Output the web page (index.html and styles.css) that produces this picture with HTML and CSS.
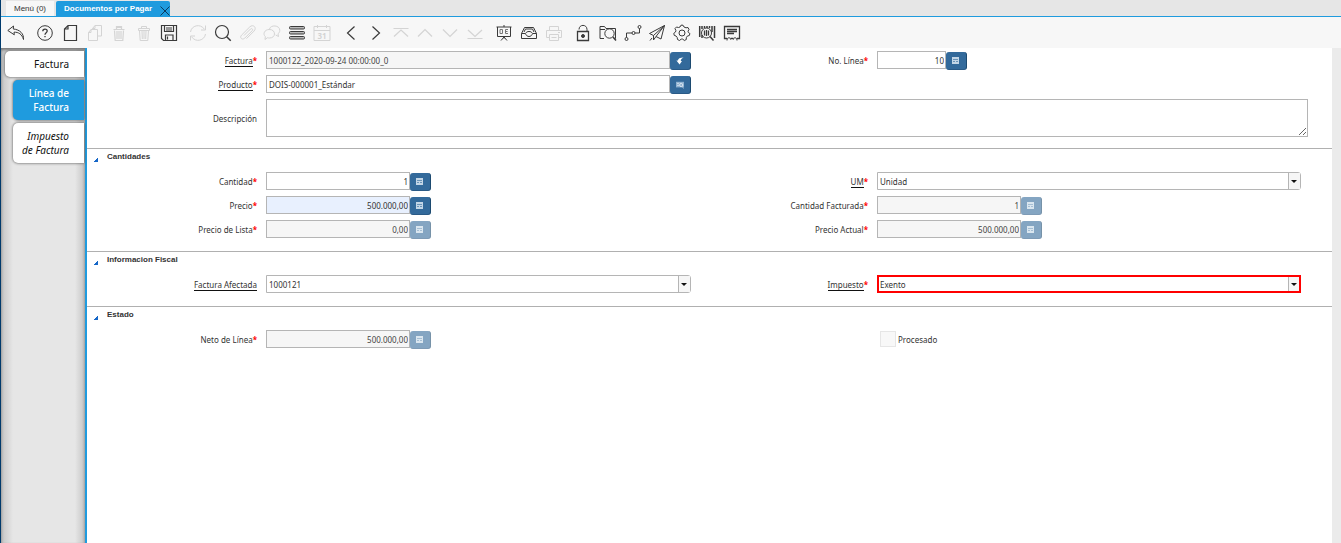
FILE: index.html
```html
<!DOCTYPE html>
<html lang="es">
<head>
    <meta charset="UTF-8">
    <meta name="viewport" content="width=device-width, initial-scale=1.0">
    <title>Documentos por Pagar</title>
    <link rel="stylesheet" href="styles.css">
</head>
<body>

    <!-- Iconos que se repiten -->
    <svg class="simbolos" aria-hidden="true">
        <symbol id="calc" viewBox="0 0 8 8">
            <rect x="0" y="0" width="7" height="7" fill="#c3d6e6"/>
            <path d="M1 2.500h5M1 4.500h2M4 4.500h2" stroke="#6a94b8" fill="none"/>
        </symbol>
    </svg>

    <nav class="pestanas">
        <a class="pestana" href="#">Menú (0)</a>
        <div class="pestana activa">
            <a href="#">Documentos por Pagar</a>
            <button class="cerrar" aria-label="Cerrar"><svg viewBox="0 0 10 10"><path d="M0.500 0.500l9 9M9.500 0.500l-9 9"/></svg></button>
        </div>
    </nav>

    <div class="barra">
        <div class="grupo uno">
            <button aria-label="Deshacer"><svg viewBox="0 0 18 18"><path d="M6.500 2L0.800 6.500l6.500 4.300-.3-2.600c4.500-.2 8 2 9.500 7.300.6-5.500-3.500-10-10.200-10.500z"/></svg></button>
        </div>
        <div class="grupo">
            <button aria-label="Ayuda"><svg viewBox="0 0 18 18"><circle cx="9" cy="9" r="7.300"/><path d="M6.800 7.300c0-3 4.400-2.800 4.400-.2 0 1.600-2.200 1.700-2.200 3.600M9 12v1.300" stroke-width="1.300"/></svg></button>
            <button aria-label="Nuevo"><svg viewBox="0 0 18 18"><path d="M7 1.500h8.500v15h-12V5zM7 1.500V5H3.500" stroke-width="1.200"/></svg></button>
            <button aria-label="Copiar" disabled><svg viewBox="0 0 18 18"><path d="M6.500 5.500V4.500l2.500-3h6.500v10.500h-4M9 1.500v3H6.500M5 5.500h6.500v11h-9V8.500zM5 5.500v3H2.500"/></svg></button>
            <button aria-label="Borrar" disabled><svg viewBox="0 0 18 18"><path d="M3.500 5.500h11M6.500 3.500h5M4.500 6.500l.7 10h7.600l.7-10M7 7v8M9 7v8M11 7v8M6.500 5.500v-3h5v3" stroke-width="1.200"/></svg></button>
            <button aria-label="Borrar selección" disabled><svg viewBox="0 0 18 18"><path d="M3.500 4.500h11v2h-11zM4.500 6.500l.7 10h7.600l.7-10M7 7l.3 8M9 7v8M11 7l-.3 8M6.500 4v-1.500h5V4"/></svg></button>
            <button aria-label="Guardar"><svg viewBox="0 0 18 18"><path d="M1.500 1.500h15v15h-13l-2-2zM4.500 2v5.500h9V2M5.500 16v-5h7.500v5M6 4h6M6 6h6M7.500 12.500v3" stroke-width="1.200"/></svg></button>
        </div>
        <div class="grupo">
            <button aria-label="Refrescar" disabled><svg viewBox="0 0 18 18"><path d="M1.500 8c.8-6.500 9.800-9 14-2.700M16.500 1.500v4.500h-4.500M16.500 10c-.8 6.500-9.800 9-14 2.700M1.500 16.500V12H6"/></svg></button>
            <button aria-label="Buscar"><svg viewBox="0 0 18 18"><circle cx="8" cy="8" r="6.500" stroke-width="1.200"/><path d="M12.700 12.700l4 4" stroke-width="1.500"/></svg></button>
            <button aria-label="Adjunto" disabled><svg viewBox="0 0 18 18"><path d="M5 11.500l6.500-6.500c1.200-1.200 3 .5 1.700 1.700l-7.500 7.500c-2.500 2.300-5.500-.6-3.200-3l8.300-8.300c3.300-3.200 7.500.8 4.200 4.200l-7.500 7.500"/></svg></button>
            <button aria-label="Chat" disabled><svg viewBox="0 0 18 18"><path d="M6.500 5c1-4.500 10.300-4 10.300 1.300 0 1.700-.9 2.800-1.800 3.500l.5 2.700-2.800-1.500M6 5.500c7-.5 7.500 8.500.5 8.500-.8 0-1.500-.1-2-.3L2 15.500l.3-3C-.5 10 1.500 5.700 6 5.500z"/></svg></button>
            <button aria-label="Cuadrícula"><svg viewBox="0 0 18 18" class="lineas"><rect x="1.500" y="2.500" width="15" height="2.500" rx="1"/><rect x="1.500" y="7.500" width="15" height="2.500" rx="1"/><rect x="1.500" y="12.500" width="15" height="2.500" rx="1"/></svg></button>
            <button aria-label="Calendario" disabled><svg viewBox="0 0 18 18"><path d="M1 2.500h16v14H1zM1 6.500h16M4.500 1v3M13.500 1v3"/><text x="4.500" y="15">31</text></svg></button>
        </div>
        <div class="grupo">
            <button aria-label="Anterior"><svg viewBox="0 0 18 18"><path d="M12.500 2.500L5.500 9l7 6.500" stroke-width="1.200"/></svg></button>
            <button aria-label="Siguiente"><svg viewBox="0 0 18 18"><path d="M5.500 2.500l7 6.500-7 6.500" stroke-width="1.200"/></svg></button>
            <button aria-label="Primero" disabled><svg viewBox="0 0 18 18"><path d="M1.500 4.500h15M2 12.500l7-6.500 7 6.500" stroke-width="1.200"/></svg></button>
            <button aria-label="Arriba" disabled><svg viewBox="0 0 18 18"><path d="M2 12.500l7-7 7 7" stroke-width="1.200"/></svg></button>
            <button aria-label="Abajo" disabled><svg viewBox="0 0 18 18"><path d="M2 5.500l7 7 7-7" stroke-width="1.200"/></svg></button>
            <button aria-label="Último" disabled><svg viewBox="0 0 18 18"><path d="M1.500 14.500h15M2 6l7 6.500L16 6" stroke-width="1.200"/></svg></button>
        </div>
        <div class="grupo tres">
            <button aria-label="Informe"><svg viewBox="0 0 18 18"><path d="M1.500 3h15M2.500 3v9.500h13V3M9 1v2M9 12.500v2M9 13l-3 3.500M9 13l3 3.500"/><path d="M5 5.500h2.500v4H5zM13 5.500h-2.500v4h2.500M10.500 7.500h2" stroke="#777"/></svg></button>
            <button aria-label="Archivo"><svg viewBox="0 0 18 18"><path d="M1.500 9.500L4.500 3.500h9l3 6v5h-15zM1.500 9.500h4c1 4 6 4 7 0h4M4 8l1.500-3h7L14 8M6 9c.5-2 5.500-2 6 0"/></svg></button>
            <button aria-label="Imprimir" disabled><svg viewBox="0 0 18 18"><path d="M4.500 6.500v-4h9v4M4.500 13.500h-3v-7h15v7h-3M4.500 10.500h9v6h-9zM6.500 13.500h5M13 8.500h2"/></svg></button>
        </div>
        <div class="grupo siete">
            <button aria-label="Bloquear"><svg viewBox="0 0 18 18"><path d="M3.500 7.500h11v9h-11z" stroke-width="1.300"/><path d="M5 5.500c0-5.500 8-5.500 8 0v2"/><circle cx="9" cy="12" r="1.500" fill="#3a3a3a"/></svg></button>
            <button aria-label="Consultar"><svg viewBox="0 0 18 18"><path d="M5 14.500H1v-12h4.500l1.500 2h9.500v10h-1M1 5.500h5"/><circle cx="10.500" cy="9.500" r="4.700"/><path d="M14 13l3 3.500" stroke-width="1.500"/></svg></button>
            <button aria-label="Flujo"><svg viewBox="0 0 18 18"><circle cx="2.500" cy="15" r="1.500"/><circle cx="9.500" cy="9" r="1.500"/><circle cx="15.500" cy="3" r="1.500"/><path d="M2.500 13.500V9H8M11 9h4.500V4.500"/></svg></button>
            <button aria-label="Enviar"><svg viewBox="0 0 18 18"><path d="M16.500 1.500L1.500 9.500l4 2zM16.500 1.500l-8.500 11 5 2.500zM5.500 11.500V16L8 12.500M2 16.500l2-2.500"/></svg></button>
            <button aria-label="Proceso"><svg viewBox="0 0 18 18"><circle cx="9" cy="9" r="3"/><path d="M7 3l1-1.800h2L11 3l2 .8 2-.3 1 2-1 1.700.4 1.300 1.500 1-.6 2-2 .6-1 1.600V15.500l-2 1-1.500-1.400h-1.600L6.500 16.500l-2-1-.3-2L3 12l-1.800-.7-.4-2 1.700-1.300.4-1.400L2 4.500 3.500 3l2 .5z"/></svg></button>
            <button aria-label="Código"><svg viewBox="0 0 18 18"><path d="M1.700 2v11M4 2v3M4 11v3M6.500 2v2M9 2v2M11.500 2v2M14 2v6M16.500 2v12" stroke-width="1.500"/><circle cx="8.500" cy="9" r="5"/><path d="M6.500 6.500v5M8.500 6v6M10.500 6.500v5" stroke-width="1.300"/><path d="M12 12.500l3.500 4" stroke-width="1.500"/></svg></button>
            <button aria-label="Recibo"><svg viewBox="0 0 18 18"><path d="M4 14.500H1.500v-12h15v12H14M7.500 14.500h3M4 5.500h10M4 7.500h10M4 9.500h7" stroke-width="1.300"/><path d="M4 16.500c0-3.500 3.500-3.500 3.500-1M10.500 15.500c0-2.500 3.500-2.500 3.500 1"/></svg></button>
        </div>
    </div>

    <div class="cuerpo">
        <nav class="lateral">
            <a class="ficha principal" href="#">Factura</a>
            <a class="ficha actual" href="#">Línea de Factura</a>
            <a class="ficha hija" href="#">Impuesto de Factura</a>
        </nav>

        <form class="formulario">
            <div class="campos cabecera">
                <label for="factura"><u>Factura</u><i>*</i></label>
                <div class="campo">
                    <input id="factura" type="text" value="1000122_2020-09-24 00:00:00_0" disabled>
                    <button type="button" class="boton" aria-label="Ver factura"><svg viewBox="0 0 10 10"><path d="M9.500 0.500C5 0.500 2.500 2 2.500 4.500H0.500l4 5L7.500 5H6c0-2 1-3.500 3.500-4.500z" fill="#fff"/></svg></button>
                </div>
                <label for="linea">No. Línea<i>*</i></label>
                <div class="campo numero corto">
                    <input id="linea" type="text" value="10">
                    <button type="button" class="boton" aria-label="Calculadora"><svg><use href="#calc"/></svg></button>
                </div>

                <label for="producto"><u>Producto</u><i>*</i></label>
                <div class="campo">
                    <input id="producto" type="text" value="DOIS-000001_Estándar">
                    <button type="button" class="boton" aria-label="Buscar producto"><svg viewBox="0 0 10 10"><path d="M0 1h10v7H0z" fill="#8fb2d0"/><path d="M1.500 3h2M1.500 5.500h2M8 7.500l1.500 1.500" stroke="#e8f0f7"/><circle cx="6.500" cy="5" r="2" fill="none" stroke="#e8f0f7"/></svg></button>
                </div>

                <label for="descripcion">Descripción</label>
                <textarea id="descripcion"></textarea>
            </div>

            <section>
                <h2><button type="button">Cantidades</button></h2>
                <div class="campos">
                    <label for="cantidad">Cantidad<i>*</i></label>
                    <div class="campo numero">
                        <input id="cantidad" type="text" value="1">
                        <button type="button" class="boton" aria-label="Calculadora"><svg><use href="#calc"/></svg></button>
                    </div>
                    <label for="um"><u>UM</u><i>*</i></label>
                    <div class="combo">
                        <select id="um"><option>Unidad</option></select>
                        <span class="flecha"></span>
                    </div>

                    <label for="precio">Precio<i>*</i></label>
                    <div class="campo numero foco">
                        <input id="precio" type="text" value="500.000,00">
                        <button type="button" class="boton" aria-label="Calculadora"><svg><use href="#calc"/></svg></button>
                    </div>
                    <label for="facturada">Cantidad Facturada<i>*</i></label>
                    <div class="campo numero">
                        <input id="facturada" type="text" value="1" disabled>
                        <button type="button" class="boton" aria-label="Calculadora" disabled><svg><use href="#calc"/></svg></button>
                    </div>

                    <label for="lista">Precio de Lista<i>*</i></label>
                    <div class="campo numero">
                        <input id="lista" type="text" value="0,00" disabled>
                        <button type="button" class="boton" aria-label="Calculadora" disabled><svg><use href="#calc"/></svg></button>
                    </div>
                    <label for="actual">Precio Actual<i>*</i></label>
                    <div class="campo numero">
                        <input id="actual" type="text" value="500.000,00" disabled>
                        <button type="button" class="boton" aria-label="Calculadora" disabled><svg><use href="#calc"/></svg></button>
                    </div>
                </div>
            </section>

            <section>
                <h2><button type="button">Informacion Fiscal</button></h2>
                <div class="campos">
                    <label for="afectada"><u>Factura Afectada</u></label>
                    <div class="combo">
                        <select id="afectada"><option>1000121</option></select>
                        <span class="flecha"></span>
                    </div>
                    <label for="impuesto"><u>Impuesto</u><i>*</i></label>
                    <div class="combo error">
                        <select id="impuesto"><option>Exento</option></select>
                        <span class="flecha"></span>
                    </div>
                </div>
            </section>

            <section>
                <h2><button type="button">Estado</button></h2>
                <div class="campos">
                    <label for="neto">Neto de Línea<i>*</i></label>
                    <div class="campo numero">
                        <input id="neto" type="text" value="500.000,00" disabled>
                        <button type="button" class="boton" aria-label="Calculadora" disabled><svg><use href="#calc"/></svg></button>
                    </div>
                    <div class="marca">
                        <input id="procesado" type="checkbox" disabled>
                        <label for="procesado">Procesado</label>
                    </div>
                </div>
            </section>
        </form>
    </div>

</body>
</html>
```
FILE: styles.css
```css
*{
    box-sizing: border-box;
}

body{
    margin: 0;
    min-height: 100vh;
    display: flex;
    flex-direction: column;
    border-left: 1px solid #003a6c;
    background-color: #e6e6e6;
    font-family: "Noto Sans", sans-serif;
    font-size: 8px;
    color: #333;
}

button, input, select, textarea{
    font: inherit;
    color: inherit;
    margin: 0;
    padding: 0;
    border: none;
    border-radius: 0;
}

button{
    background: none;
    cursor: pointer;
}

a{
    color: inherit;
    text-decoration: none;
}

.simbolos{
    position: absolute;
    width: 0;
    height: 0;
}

/* Pestañas superiores */
.pestanas{
    display: flex;
    align-items: flex-end;
    gap: 2px;
    height: 17px;
    padding-left: 5px;
    border-bottom: 1px solid #1f9bde;
    font-family: "Liberation Sans", sans-serif;
}

.pestana{
    display: flex;
    align-items: center;
    height: 15px;
    padding: 0 8px;
    background-color: #f7f7f7;
}

.pestana.activa{
    gap: 8px;
    padding-right: 0;
    background-color: #1f9bde;
    color: #fff;
    font-weight: bold;
    border-radius: 2px 2px 0 0;
}

.cerrar{
    display: flex;
    align-items: flex-end;
    height: 15px;
}

.cerrar svg{
    width: 10px;
    height: 10px;
    stroke: #0b3a5c;
    fill: none;
}

/* Barra de herramientas */
.barra{
    display: flex;
    gap: 5px;
    height: 31px;
    padding-left: 3px;
    background-color: #f7f7f7;
}

.grupo{
    display: grid;
    grid-auto-flow: column;
    grid-auto-columns: 1fr;
    width: 148px;
}

.grupo.uno{
    width: 24px;
}

.grupo.tres{
    width: 74px;
}

.grupo.siete{
    width: 173px;
}

.barra button{
    display: flex;
    align-items: center;
    justify-content: center;
}

.barra button:disabled{
    opacity: .18;
}

.barra svg{
    width: 18px;
    height: 18px;
    fill: none;
    stroke: #3a3a3a;
}

.barra .lineas{
    fill: #bbb;
}

.barra text{
    font-size: 8px;
    font-weight: bold;
    fill: #333;
    stroke: none;
}

/* Cuerpo */
.cuerpo{
    flex: 1;
    display: flex;
}

.lateral{
    width: 86px;
    display: flex;
    flex-direction: column;
    align-items: flex-end;
    gap: 3px;
    padding: 3px 1px 0 4px;
    border-right: 2px solid #1f9bde;
    background: linear-gradient(to right, #c4c4c4, #e6e6e6 12px, #e6e6e6 74px, #c4c4c4);
    box-shadow: inset 0 2px 3px #777;
}

.ficha{
    display: flex;
    align-items: center;
    width: 71px;
    height: 40px;
    padding: 0 15px 0 5px;
    background-color: #fff;
    border-radius: 5px 0 0 5px;
    box-shadow: 0 0 3px #444;
    color: #111;
    font-size: 10px;
    line-height: 14px;
    text-align: right;
    justify-content: flex-end;
}

.ficha.principal{
    width: 79px;
    height: 26px;
}

.ficha.actual{
    background-color: #1f9bde;
    color: #fff;
    font-weight: 500;
}

.ficha.hija{
    font-style: italic;
}

/* Formulario */
.formulario{
    flex: 1;
    padding-top: 3px;
    background-color: #fff;
    border-right: 9px solid #ebebeb;
}

.campos{
    display: grid;
    grid-template-columns: 170fr 425fr 168fr 424fr 22fr;
    column-gap: 9px;
    row-gap: 6px;
    align-items: center;
    padding-bottom: 13px;
}

.campos.cabecera{
    padding-bottom: 11px;
}

.campos > label{
    text-align: right;
}

.campos > label:nth-of-type(odd){
    grid-column: 1;
}

.campos > label:nth-of-type(even){
    grid-column: 3;
}

.campos.cabecera > label[for="descripcion"]{
    grid-column: 1;
}

label u{
    text-decoration: none;
    border-bottom: 1px solid #111;
}

label i{
    color: #f00;
    font-style: normal;
    font-weight: bold;
}

.campo{
    display: flex;
    height: 18px;
}

.campo.numero{
    width: 165px;
}

.campo.corto{
    width: 90px;
}

.campo input{
    flex: 1;
    min-width: 0;
    padding: 0 2px;
    border: 1px solid #b5b5b5;
    background-color: #fff;
}

.campo.numero input{
    padding-right: 1px;
    text-align: right;
}

.campo input:disabled{
    background-color: #f6f6f6;
    color: #444;
}

.campo.foco input{
    background-color: #e8f0fe;
}

.boton{
    display: flex;
    align-items: center;
    justify-content: center;
    width: 21px;
    height: 18px;
    margin-top: 1px;
    background-color: #336a9b;
    border-right: 1px solid #1c4a70;
    border-bottom: 1px solid #2a5a86;
    border-radius: 3px;
}

.boton:disabled{
    opacity: .6;
}

.boton svg{
    width: 8px;
    height: 8px;
}

textarea{
    grid-column: 2 / 6;
    height: 38px;
    margin-right: 24px;
    border: 1px solid #b5b5b5;
}

.combo{
    display: flex;
    height: 18px;
    border: 1px solid #b5b5b5;
    border-radius: 0 3px 3px 0;
}

.combo select{
    flex: 1;
    appearance: none;
    padding: 0 2px;
    background-color: #fff;
}

.flecha{
    display: flex;
    align-items: center;
    justify-content: center;
    width: 12px;
    padding-right: 1px;
    background-color: #f6f6f6;
    border-left: 1px solid #b5b5b5;
}

.flecha::after{
    content: "";
    border: 3px solid transparent;
    border-top-color: #111;
    border-bottom: none;
}

.combo.error{
    border: 2px solid #f00;
    border-radius: 0;
}

.combo.error select{
    padding: 0 1px;
}

.combo.error .flecha{
    width: 11px;
    padding-right: 0;
}

section{
    border-top: 1px solid #b0b0b0;
}

h2{
    margin: 0;
    height: 23px;
    padding: 2px 0 0 7px;
    font-family: "Liberation Sans", sans-serif;
    font-size: 8px;
    line-height: 11px;
}

h2 button{
    display: flex;
    align-items: flex-end;
    gap: 9px;
}

h2 button::before{
    content: "";
    width: 4px;
    height: 4px;
    background: linear-gradient(to bottom right, transparent 40%, #1667c8 40%);
}

.marca{
    grid-column: 4;
    display: flex;
    align-items: center;
    gap: 2px;
    padding-left: 3px;
}

.marca input{
    appearance: none;
    width: 16px;
    height: 16px;
    background-color: #f8f8f8;
    border: 1px solid #e6e6e6;
}
```
